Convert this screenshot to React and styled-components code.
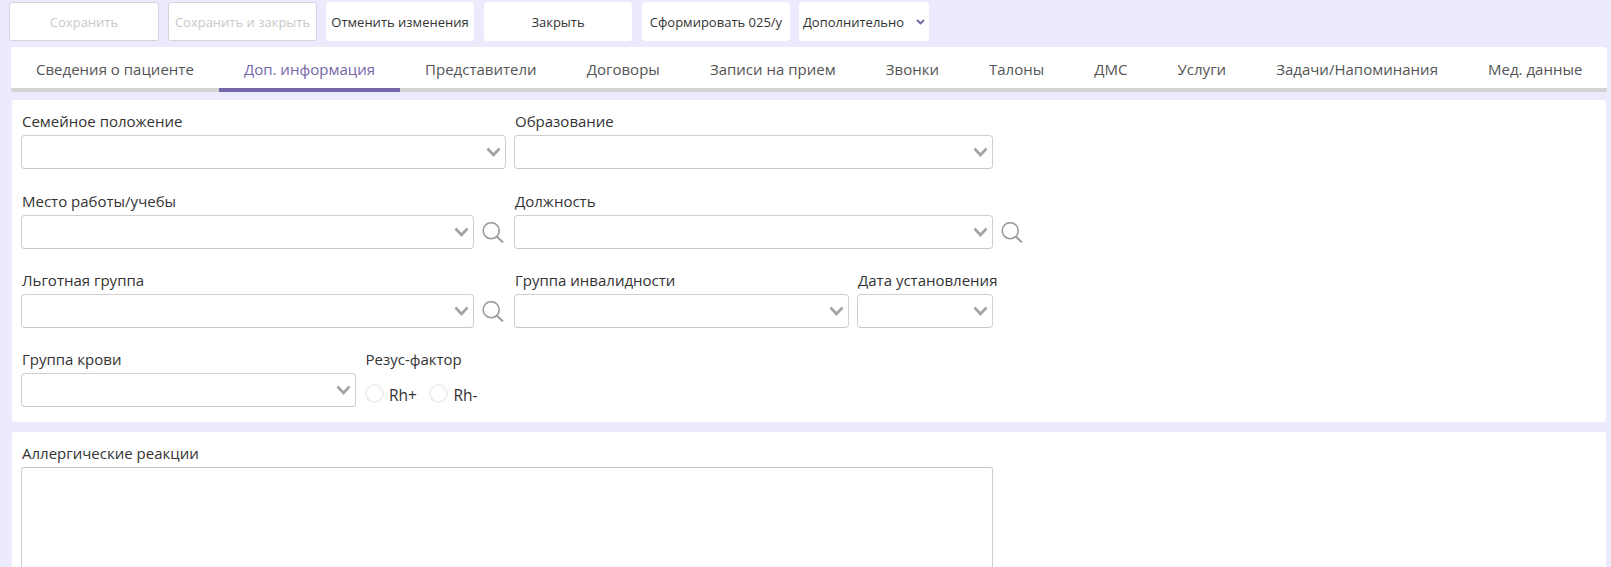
import styled, { createGlobalStyle } from "styled-components";

const GlobalStyle = createGlobalStyle`
  html, body {
    margin: 0;
    padding: 0;
    background: #ecebfd;
    font-family: "Open Sans", "Noto Sans", sans-serif;
  }
`;

const Page = styled.div`
  height: 100vh;
  overflow: hidden;
  box-sizing: border-box;
  padding-top: 2px;
`;

// верхняя панель с кнопками
const Toolbar = styled.div`
  display: flex;
  gap: 9px;
  height: 39px;
  padding-left: 9px;
  margin-bottom: 6px;
`;

const ToolButton = styled.button`
  box-sizing: border-box;
  width: ${(p) => p.$width}px;
  height: 39px;
  margin-left: ${(p) => (p.$shift ? "1px" : "0")};
  padding: 0;
  background: #fff;
  border: 1px solid ${(p) => (p.disabled ? "#d4d4de" : "#fff")};
  border-radius: 3px;
  color: ${(p) => (p.disabled ? "#c9c9c9" : "#333")};
  font-family: inherit;
  font-size: 13px;
  display: flex;
  align-items: center;
  justify-content: center;
  gap: ${(p) => (p.$menu ? "12px" : "0")};
`;

const Tabs = styled.div`
  display: flex;
  box-sizing: border-box;
  height: 45px;
  margin: 0 4px 8px 11px;
  background: #fff;
  border-bottom: 4px solid #d3d3d3;
  border-radius: 3px;
`;

const Tab = styled.div`
  height: 45px;
  box-sizing: border-box;
  display: flex;
  align-items: center;
  padding: 6px 25px 4px;
  white-space: nowrap;
  font-size: 15px;
  letter-spacing: 0.012px;
  color: ${(p) => (p.$active ? "#7566a8" : "#555")};
  border-bottom: 4px solid ${(p) => (p.$active ? "#7566a8" : "transparent")};
`;

const Panel = styled.div`
  margin: 0 5px 10.3px 12px;
  padding: 12px 0 14.7px 9px;
  background: #fff;
  border-radius: 3px;
`;

const Row = styled.div`
  display: flex;
  gap: 8.5px;
  margin-bottom: ${(p) => p.$gap}px;
`;

const Field = styled.div`
  width: ${(p) => p.$width}px;
  flex: none;
`;

const Label = styled.div`
  height: 20px;
  margin: 0 0 3px 1px;
  line-height: 18px;
  font-size: 15px;
  color: #333;
  white-space: nowrap;
`;

const Select = styled.div`
  box-sizing: border-box;
  height: 34px;
  display: flex;
  align-items: center;
  justify-content: flex-end;
  padding-right: 4px;
  background: #fff;
  border: 1px solid #d0d0d0;
  border-bottom-color: #c8c8c8;
  border-radius: 4px;
  flex: 1;
  min-width: 0;
`;

const SelectRow = styled.div`
  display: flex;
  align-items: center;
`;

const SearchButton = styled.div`
  flex: none;
  width: 31.5px;
  box-sizing: border-box;
  padding-left: 8px;
  display: flex;
  margin-right: ${(p) => (p.$outside ? "-31.5px" : "0")};
`;

const RadioRow = styled.div`
  display: flex;
  align-items: center;
  height: 34px;
  margin: 6.5px 0 -6.5px;
  font-size: 15.5px;
  color: #333;
`;

const Radio = styled.span`
  box-sizing: border-box;
  width: 19px;
  height: 19px;
  margin-right: 5.5px;
  border: 2px solid #efefef;
  border-radius: 50%;
`;

const RadioText = styled.span`
  margin: 2px 12px 0 0;
`;

const TextArea = styled.textarea`
  display: block;
  box-sizing: border-box;
  width: 972px;
  height: 220px;
  padding: 6px;
  resize: none;
  border: 1px solid #cfcfcf;
  border-top-color: #c4c4c4;
  border-radius: 3px;
  outline: none;
`;

const Chevron = () => (
  <svg width="15" height="10" viewBox="0 0 15 10" fill="none">
    <path d="M1.5 1.5 7.5 8 13.5 1.5" stroke="#a3a3a3" strokeWidth="2.6" />
  </svg>
);

const SmallChevron = () => (
  <svg width="9" height="6" viewBox="0 0 9 6" fill="none">
    <path d="M1 1 4.5 4.5 8 1" stroke="#7566a8" strokeWidth="1.8" />
  </svg>
);

const SearchIcon = () => (
  <svg width="22" height="21" viewBox="0 0 22 21" fill="none" stroke="#9a9a9a">
    <circle cx="9.2" cy="8.7" r="8" strokeWidth="1.6" />
    <path d="M14.8 14.6 21 20.4" strokeWidth="2" />
  </svg>
);

const tabs = [
  "Сведения о пациенте",
  "Доп. информация",
  "Представители",
  "Договоры",
  "Записи на прием",
  "Звонки",
  "Талоны",
  "ДМС",
  "Услуги",
  "Задачи/Напоминания",
  "Мед. данные",
];

const SelectField = ({ label, width, search, outside }) => (
  <Field $width={width}>
    <Label>{label}</Label>
    <SelectRow>
      <Select>
        <Chevron />
      </Select>
      {search && (
        <SearchButton $outside={outside}>
          <SearchIcon />
        </SearchButton>
      )}
    </SelectRow>
  </Field>
);

const App = () => {
  return (
    <Page>
      <GlobalStyle />
      <Toolbar>
        <ToolButton $width={150} disabled>Сохранить</ToolButton>
        <ToolButton $width={149} disabled>Сохранить и закрыть</ToolButton>
        <ToolButton $width={148}>Отменить изменения</ToolButton>
        <ToolButton $width={148} $shift>Закрыть</ToolButton>
        <ToolButton $width={148} $shift>Сформировать 025/у</ToolButton>
        <ToolButton $width={130} $menu>
          Дополнительно
          <SmallChevron />
        </ToolButton>
      </Toolbar>

      <Tabs>
        {tabs.map((tab) => (
          <Tab key={tab} $active={tab === "Доп. информация"}>{tab}</Tab>
        ))}
      </Tabs>

      <Panel>
        <Row $gap={23}>
          <SelectField label="Семейное положение" width={484.5} />
          <SelectField label="Образование" width={479} />
        </Row>
        <Row $gap={22}>
          <SelectField label="Место работы/учебы" width={484.5} search />
          <SelectField label="Должность" width={479} search outside />
        </Row>
        <Row $gap={22}>
          <SelectField label="Льготная группа" width={484.5} search />
          <SelectField label="Группа инвалидности" width={334.5} />
          <SelectField label="Дата установления" width={136} />
        </Row>
        <Row $gap={0}>
          <SelectField label="Группа крови" width={335} />
          <Field $width={200}>
            <Label>Резус-фактор</Label>
            <RadioRow>
              <Radio />
              <RadioText>Rh+</RadioText>
              <Radio />
              <RadioText>Rh-</RadioText>
            </RadioRow>
          </Field>
        </Row>
      </Panel>

      <Panel>
        <Label>Аллергические реакции</Label>
        <TextArea />
      </Panel>
    </Page>
  );
};

export default App;
